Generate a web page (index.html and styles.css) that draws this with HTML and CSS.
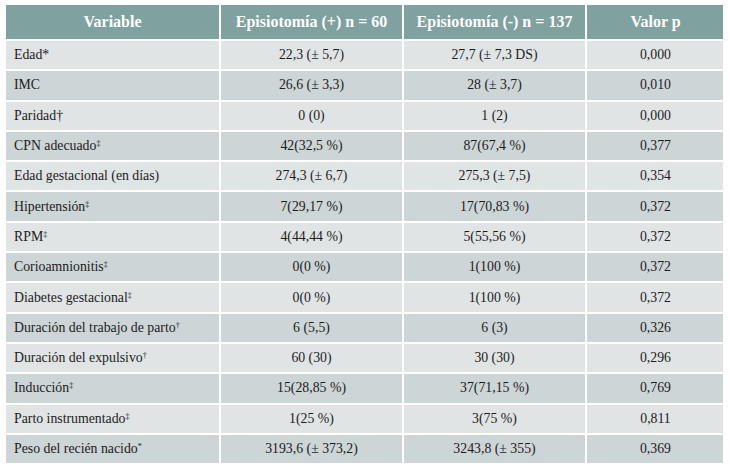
FILE: index.html
```html
<!DOCTYPE html>
<html lang="es">
<head>
<meta charset="utf-8">
<link rel="stylesheet" href="styles.css">
</head>
<body>
<table class="data">
<colgroup><col class="c1"><col class="c2"><col class="c3"><col class="c4"></colgroup>
<thead>
<tr><th>Variable</th><th>Episiotomía (+) n = 60</th><th>Episiotomía (-) n = 137</th><th>Valor p</th></tr>
</thead>
<tbody>
<tr><td>Edad*</td><td>22,3 (± 5,7)</td><td>27,7 (± 7,3 DS)</td><td>0,000</td></tr>
<tr><td>IMC</td><td>26,6 (± 3,3)</td><td>28 (± 3,7)</td><td>0,010</td></tr>
<tr><td>Paridad†</td><td>0 (0)</td><td>1 (2)</td><td>0,000</td></tr>
<tr><td>CPN adecuado<sup>‡</sup></td><td>42(32,5 %)</td><td>87(67,4 %)</td><td>0,377</td></tr>
<tr><td>Edad gestacional (en días)</td><td>274,3 (± 6,7)</td><td>275,3 (± 7,5)</td><td>0,354</td></tr>
<tr><td>Hipertensión<sup>‡</sup></td><td>7(29,17 %)</td><td>17(70,83 %)</td><td>0,372</td></tr>
<tr><td>RPM<sup>‡</sup></td><td>4(44,44 %)</td><td>5(55,56 %)</td><td>0,372</td></tr>
<tr><td>Corioamnionitis<sup>‡</sup></td><td>0(0 %)</td><td>1(100 %)</td><td>0,372</td></tr>
<tr><td>Diabetes gestacional<sup>‡</sup></td><td>0(0 %)</td><td>1(100 %)</td><td>0,372</td></tr>
<tr><td>Duración del trabajo de parto<sup>†</sup></td><td>6 (5,5)</td><td>6 (3)</td><td>0,326</td></tr>
<tr><td>Duración del expulsivo<sup>†</sup></td><td>60 (30)</td><td>30 (30)</td><td>0,296</td></tr>
<tr><td>Inducción<sup>‡</sup></td><td>15(28,85 %)</td><td>37(71,15 %)</td><td>0,769</td></tr>
<tr><td>Parto instrumentado<sup>‡</sup></td><td>1(25 %)</td><td>3(75 %)</td><td>0,811</td></tr>
<tr><td>Peso del recién nacido<sup>*</sup></td><td>3193,6 (± 373,2)</td><td>3243,8 (± 355)</td><td>0,369</td></tr>
</tbody>
</table>
</body>
</html>
```
FILE: styles.css
```css
html, body {
  background: #ffffff;
}
body {
  margin: 3px 6px 0 4px;
  font-family: "Liberation Serif", "Times New Roman", serif;
  color: #1c1c1c;
}
.data {
  border-collapse: collapse;
  width: 720px;
  table-layout: fixed;
  font-size: 13.8px;
}
.c1 { width: 215px; }
.c2 { width: 183px; }
.c3 { width: 183px; }
.c4 { width: 139px; }
.data th, .data td {
  border: 2px solid #ffffff;
  padding: 0 8px;
  vertical-align: middle;
}
.data th {
  background: #7fa19f;
  color: #ffffff;
  font-weight: bold;
  font-size: 16px;
  height: 34px;
  text-align: center;
}
.data td {
  height: 28.3px;
  text-align: center;
}
.data td:first-child {
  text-align: left;
}
.data tbody tr:nth-child(odd) td {
  background: #e0e4e5;
}
.data tbody tr:nth-child(even) td {
  background: #cdd5d7;
}
.data sup {
  font-size: 8px;
  vertical-align: 4px;
  line-height: 0;
}
```
